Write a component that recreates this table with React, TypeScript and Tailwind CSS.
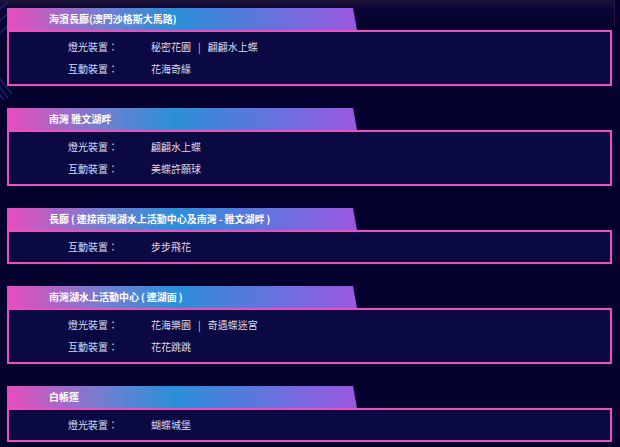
import React from "react";

type Row = { label: string; values: string[] };
type Section = { title: string; rows: Row[] };

const sections: Section[] = [
  {
    title: "海濱長廊(澳門沙格斯大馬路)",
    rows: [
      { label: "燈光裝置：", values: ["秘密花園", "翩翩水上蝶"] },
      { label: "互動裝置：", values: ["花海奇緣"] },
    ],
  },
  {
    title: "南灣 雅文湖畔",
    rows: [
      { label: "燈光裝置：", values: ["翩翩水上蝶"] },
      { label: "互動裝置：", values: ["美蝶許願球"] },
    ],
  },
  {
    title: "長廊\u2009(\u2009連接南灣湖水上活動中心及南灣\u2009-\u2009雅文湖畔\u2009)",
    rows: [{ label: "互動裝置：", values: ["步步飛花"] }],
  },
  {
    title: "南灣湖水上活動中心\u2009(\u2009連湖面\u2009)",
    rows: [
      { label: "燈光裝置：", values: ["花海樂園", "奇遇蝶迷宮"] },
      { label: "互動裝置：", values: ["花花跳跳"] },
    ],
  },
  {
    title: "白帳篷",
    rows: [{ label: "燈光裝置：", values: ["蝴蝶城堡"] }],
  },
];

function Block({ s }: { s: Section }) {
  return (
    <div className="flex flex-col">
      <div className="w-[350px] h-[22px] flex items-center pl-[42px] bg-[linear-gradient(90deg,#e84dbd_0%,#6f7fd0_28%,#2b8fd8_48%,#5a78dc_70%,#9b57e0_100%)] [clip-path:polygon(0_0,346px_0,350px_100%,0_100%)]">
        <span className="text-[10px] font-bold text-white leading-none">{s.title}</span>
      </div>
      <div className="w-[605px] border-2 border-[#ee4fba] bg-[#0b0942] py-[4px]">
        {s.rows.map((r) => (
          <div key={r.label} className="h-[22px] flex items-center text-[10px] text-[#dcdaf0] leading-none">
            <span className="w-[142px] pl-[59px]">{r.label}</span>
            {r.values.map((v, i) => (
              <React.Fragment key={v}>
                {i > 0 && <span className="mx-[7px]">|</span>}
                <span>{v}</span>
              </React.Fragment>
            ))}
          </div>
        ))}
      </div>
    </div>
  );
}

export default function App() {
  return (
    <div className="relative w-[620px] h-[447px] overflow-hidden bg-[#04012e] font-['Noto_Sans_CJK_TC','Noto_Sans',sans-serif]">
      <div className="absolute inset-x-0 top-0 h-[26px] bg-[linear-gradient(180deg,#1c1337_0%,#0a0535_35%,#06022f_100%)] border-r border-[#2a1245] w-[615px]" />
      <svg className="absolute left-0 top-0" width="16" height="110" viewBox="0 0 16 110">
        <g stroke="#16247a" strokeWidth="1.5">
          <line x1="-6" y1="14" x2="8" y2="2" />
          <line x1="-6" y1="26" x2="12" y2="10" />
          <line x1="-6" y1="38" x2="10" y2="24" />
          <line x1="-4" y1="74" x2="12" y2="94" />
          <line x1="-4" y1="82" x2="8" y2="98" />
          <line x1="-4" y1="90" x2="4" y2="100" />
        </g>
      </svg>
      <div className="relative flex flex-col gap-[22px] pt-[8px] pl-[7px]">
        {sections.map((s) => (
          <Block key={s.title} s={s} />
        ))}
      </div>
    </div>
  );
}
